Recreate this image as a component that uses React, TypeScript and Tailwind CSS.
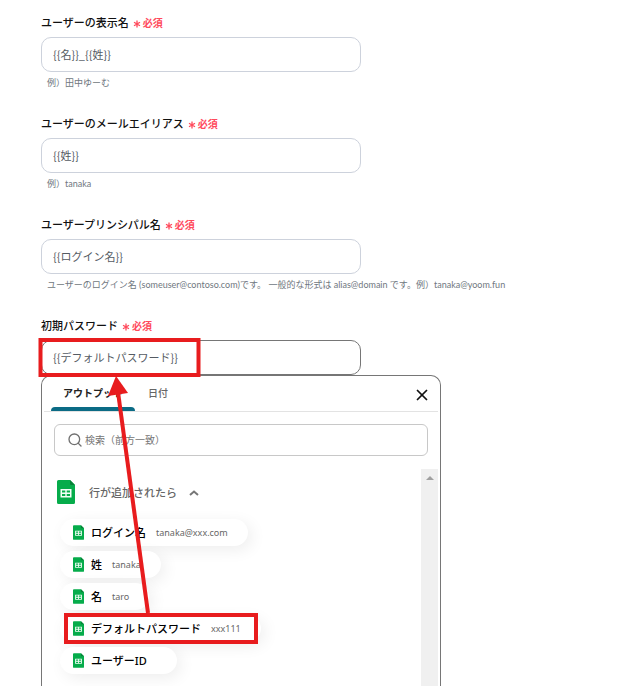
import React, { useState } from 'react';
import { Search, X } from 'lucide-react';

interface FieldProps {
  id: string;
  label: string;
  initial: string;
  hint?: string;
  active?: boolean;
}

const RequiredMark: React.FC = () => (
  <svg viewBox="0 0 8 8" className="ml-1 mt-0.5 h-2 w-2" aria-hidden="true">
    <path d="M4 .5v7M1 2.200l6 3.600M7 2.200L1 5.800" stroke="#ff4a5c" strokeWidth="1.300" fill="none" />
  </svg>
);

const Field: React.FC<FieldProps> = ({ id, label, initial, hint, active }) => {
  const [value, setValue] = useState(initial);

  return (
    <div className="flex flex-col">
      <label htmlFor={id} className="flex h-4 items-center text-[11px] font-medium text-[#111]">
        {label}
        <RequiredMark />
        <span className="ml-0.5 text-[10px] font-bold text-[#ff4a5c]">必須</span>
      </label>
      <input
        id={id}
        type="text"
        value={value}
        onChange={(e) => setValue(e.target.value)}
        className={
          active
            ? "mt-1.5 h-[35px] w-full max-w-80 rounded-[10px] border border-[#767676] px-[11px] pb-0.5 font-['Noto_Sans_CJK_JP',sans-serif] text-[11px] text-[#555b63] outline-none"
            : "mt-1.5 h-[35px] w-full max-w-80 rounded-[10px] border border-[#cdd2dc] px-[11px] pb-0.5 font-['Noto_Sans_CJK_JP',sans-serif] text-[11px] text-[#555b63] outline-none"
        }
      />
      {hint && (
        <p className="mt-1 pl-1.5 font-['Lato','Noto_Sans_CJK_JP',sans-serif] text-[9px] leading-[14px] text-[#6f7780]">{hint}</p>
      )}
    </div>
  );
};

const SheetIcon: React.FC<{ className?: string }> = ({ className }) => (
  <svg viewBox="0 0 18 24" className={className} aria-hidden="true">
    <path d="M1.500 0H13l5 5v17.500a1.500 1.500 0 0 1-1.500 1.500h-15A1.500 1.500 0 0 1 0 22.500v-21A1.500 1.500 0 0 1 1.500 0z" fill="#06ac4b" />
    <path d="M13 0l5 5h-4a1 1 0 0 1-1-1z" fill="#078238" />
    <path d="M3.500 9h11v8.500h-11zM5 10.400v2.100h3.300v-2.100zM9.700 10.400v2.100H13v-2.100zM5 14v2.100h3.300V14zM9.700 14v2.100H13V14z" fill="#f4fff8" fillRule="evenodd" />
  </svg>
);

const outputs = [
  { name: 'ログイン名', sample: 'tanaka@xxx.com' },
  { name: '姓', sample: 'tanaka' },
  { name: '名', sample: 'taro' },
  { name: 'デフォルトパスワード', sample: 'xxx111' },
  { name: 'ユーザーID', sample: '' },
];

const OutputPicker: React.FC = () => {
  const [query, setQuery] = useState('');

  return (
    <section className="flex min-h-0 w-full max-w-[400px] flex-1 flex-col rounded-t-[10px] border border-b-0 border-[#767676] px-0.5">
      <div className="flex h-9 shrink-0 items-stretch border-b border-[#e3e3e3] pl-[7px]">
        <button className="flex w-[84px] flex-col items-center justify-between text-[10px] font-bold text-[#222]">
          <span className="pt-2.5">アウトプット</span>
          <span className="h-1 w-full shrink-0 rounded-t-sm bg-[#0b6b85]" />
        </button>
        <button className="ml-[3px] flex w-10 flex-col items-center pt-2.5 text-[10px] font-medium text-[#666]">日付</button>
        <button aria-label="閉じる" className="ml-auto mr-[7px] pt-0.5 text-[#111]">
          <X size={18} strokeWidth={2.300} />
        </button>
      </div>
      <div className="mx-2.5 mt-3 flex h-8 shrink-0 items-center rounded-md border border-[#c8c8c8] pl-3">
        <Search size={16} strokeWidth={2} className="shrink-0 text-[#707070]" />
        <input
          type="text"
          aria-label="検索"
          placeholder="検索（前方一致）"
          value={query}
          onChange={(e) => setQuery(e.target.value)}
          className="ml-0.5 min-w-0 flex-1 text-[10px] outline-none placeholder:text-[#757575]"
        />
      </div>
      <div className="mt-[13px] flex min-h-0 flex-1 overflow-hidden">
        <div className="flex-1 pl-[13px] pt-[11px]">
          <button className="flex h-6 items-center text-[11px] font-medium text-[#666]">
            <SheetIcon className="mr-3.5 h-6 w-[18px]" />
            <span className="pt-0.5">行が追加されたら</span>
            <svg viewBox="0 0 10 6" className="ml-3 mt-0.5 h-1.5 w-2.5" aria-hidden="true">
              <path d="M1 5l4-3.500L9 5" fill="none" stroke="#777" strokeWidth="2" />
            </svg>
          </button>
          <ul className="mt-[15px] flex flex-col items-start gap-[5px] pl-[3px]">
            {outputs.map((o) => (
              <li key={o.name}>
                <button className="flex h-[27px] items-center rounded-full bg-white pl-[13px] pr-5 shadow-[4px_4px_16px_rgba(0,0,0,0.07)]">
                  <SheetIcon className="h-[15px] w-[11px]" />
                  <span className="ml-[7px] pt-px text-[11px] font-medium text-black">{o.name}</span>
                  <span className="ml-2.5 text-[9px] text-[#666]">{o.sample}</span>
                </button>
              </li>
            ))}
          </ul>
        </div>
        <div className="flex w-[17px] justify-center bg-[#f0f0f0] pt-[7px]">
          <svg width="8" height="4" viewBox="0 0 8 4" aria-hidden="true">
            <path d="M4 0l4 4H0z" fill="#a0a0a0" />
          </svg>
        </div>
      </div>
    </section>
  );
};

// Red frames and the arrow that links the chosen output to its field
const Annotations: React.FC = () => (
  <svg className="pointer-events-none absolute left-0 top-0" width="300" height="660" aria-hidden="true">
    <g fill="none" stroke="#e81c1e" strokeWidth="4">
      <rect x="40.500" y="340" width="158" height="35" />
      <rect x="66" y="615" width="190" height="27" />
      <path d="M148 613L118 392" />
    </g>
    <path d="M116 376l12 17-20 3z" fill="#e81c1e" />
  </svg>
);

const App: React.FC = () => {
  return (
    <main className="relative flex h-screen flex-col overflow-hidden bg-white pl-[41px] pr-4 pt-[15px] font-['Noto_Sans','Noto_Sans_CJK_JP',sans-serif]">
      <div className="flex flex-col gap-[26px]">
        <Field id="display-name" label="ユーザーの表示名" initial="{{名}}_{{姓}}" hint="例）田中ゆーむ" />
        <Field id="mail-alias" label="ユーザーのメールエイリアス" initial="{{姓}}" hint="例）tanaka" />
        <Field
          id="principal-name"
          label="ユーザープリンシパル名"
          initial="{{ログイン名}}"
          hint="ユーザーのログイン名 (someuser@contoso.com)です。 一般的な形式は alias@domain です。例）tanaka@yoom.fun"
        />
        <Field id="password" label="初期パスワード" initial="{{デフォルトパスワード}}" active />
      </div>
      <OutputPicker />
      <Annotations />
    </main>
  );
};

export default App;
